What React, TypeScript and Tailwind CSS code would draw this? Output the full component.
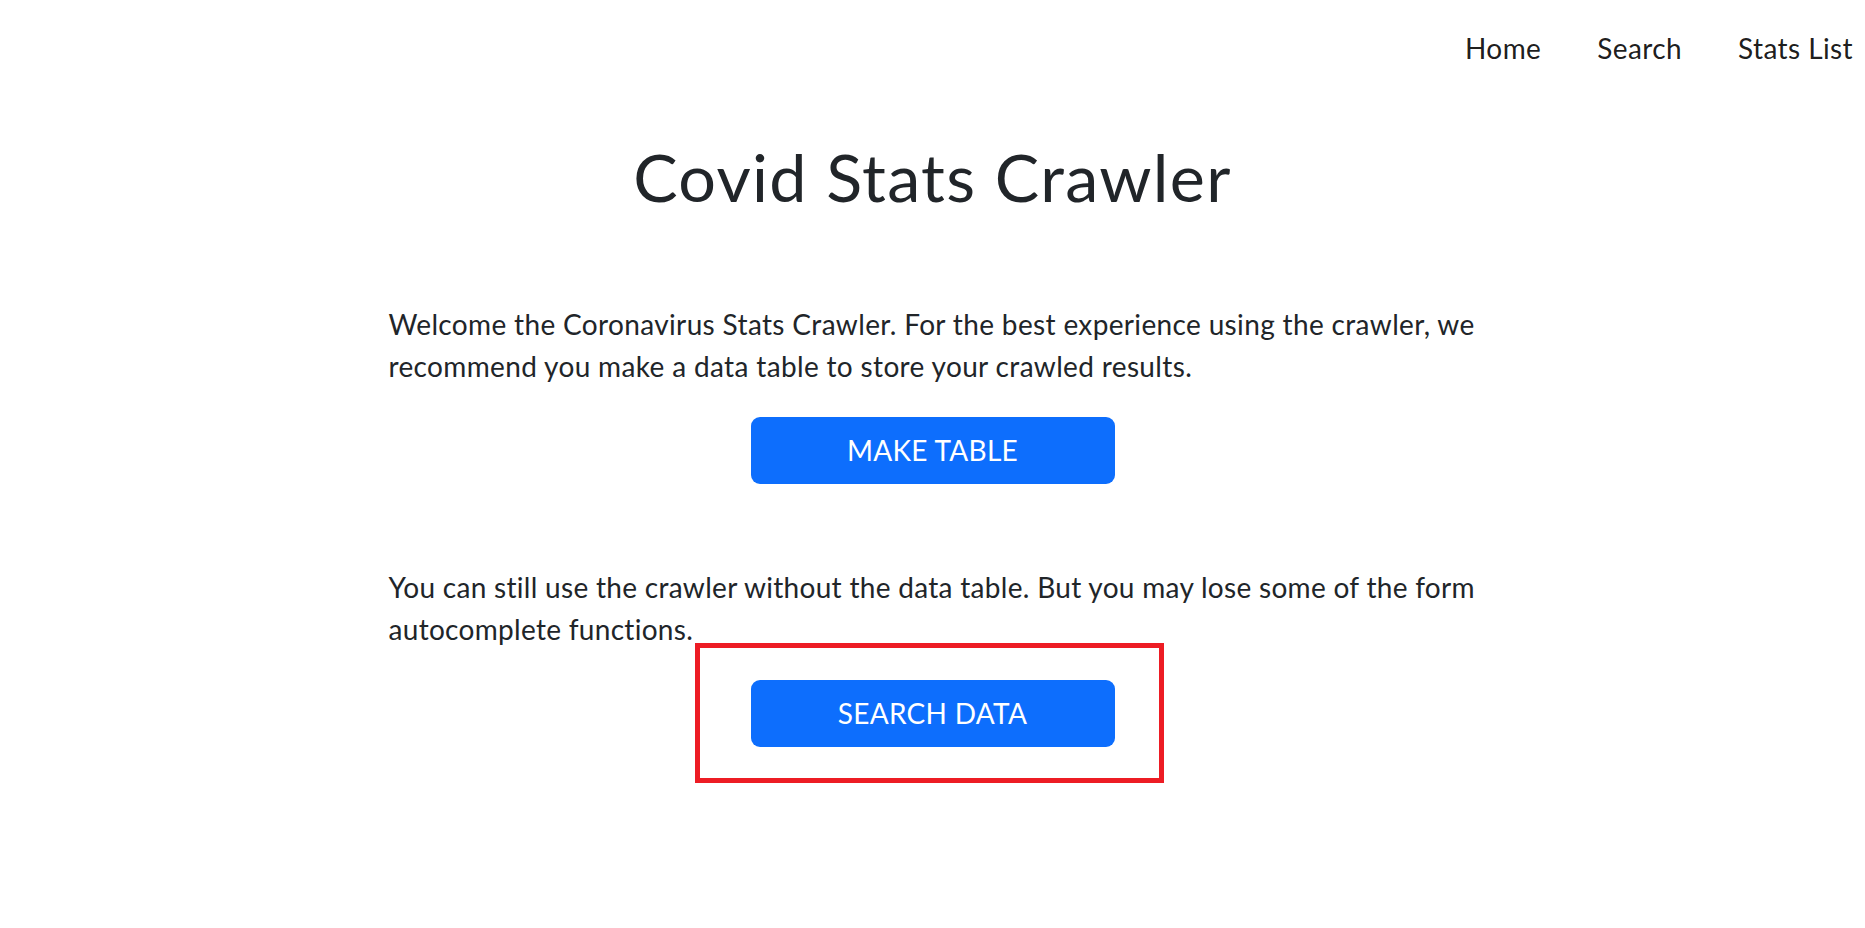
import { useState } from "react";

interface NavLink {
  href: string;
  label: string;
}

const navlinks: NavLink[] = [
  { href: "#", label: "Home" },
  { href: "#", label: "Search" },
  { href: "#", label: "Stats List" },
];

const font = { fontFamily: "Lato, 'Noto Sans', 'Liberation Sans', sans-serif" };

const App = () => {
  const [active, setActive] = useState("Home");

  return (
    <div className="min-h-screen bg-white text-[#212529]" style={font}>
      <nav className="flex justify-end gap-[56px] pr-[12px] pt-[27px]">
        {navlinks.map(({ href, label }) => (
          <a
            key={label}
            href={href}
            onClick={() => setActive(label)}
            className={`text-[28px] leading-[42px] tracking-[0.4px] ${
              active === label ? "text-black/90" : "text-black/90"
            }`}
          >
            {label}
          </a>
        ))}
      </nav>

      <h1 className="mt-[68px] text-center text-[66.5px] font-normal leading-[1.2] tracking-[1.3px]">
        Covid Stats Crawler
      </h1>

      <main className="mx-auto mt-[86px] w-[1088px]">
        <p className="whitespace-nowrap text-[28px] leading-[42px] tracking-[0.35px]">
          Welcome the Coronavirus Stats Crawler. For the best experience using the crawler, we
          <br />
          recommend you make a data table to store your crawled results.
        </p>
        <div className="mt-[30px] flex justify-center">
          <button className="h-[67px] w-[364px] rounded-[9px] bg-[#0d6efd] text-[28px] uppercase tracking-[0.3px] text-white">
            Make Table
          </button>
        </div>

        <p className="mt-[82px] whitespace-nowrap text-[28px] leading-[42px] tracking-[0.3px]">
          You can still use the crawler without the data table. But you may lose some of the form
          <br />
          autocomplete functions.
        </p>
        <div className="mt-[30px] flex justify-center">
          <div className="relative">
            <button className="h-[67px] w-[364px] rounded-[9px] bg-[#0d6efd] text-[28px] uppercase tracking-[0.3px] text-white">
              Search Data
            </button>
            <div className="pointer-events-none absolute left-[-56px] top-[-37px] h-[140px] w-[469px] border-[5px] border-[#ed1c24]" />
          </div>
        </div>
      </main>
    </div>
  );
};

export default App;
